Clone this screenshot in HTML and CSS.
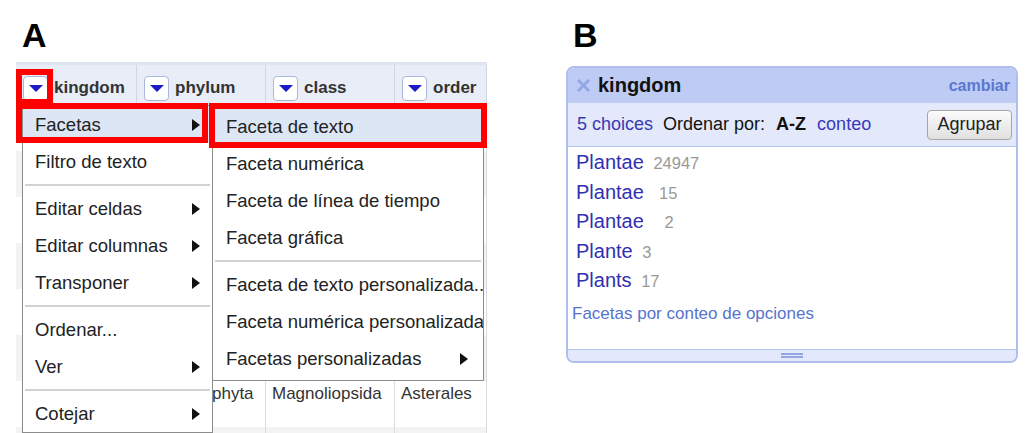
FILE: index.html
```html
<!DOCTYPE html>
<html lang="es">
<head>
<meta charset="utf-8">
<title>Facetas</title>
<link rel="stylesheet" href="styles.css">
</head>
<body>
<div class="page">
  <section class="panel-a">
    <div class="label">A</div>
    <div class="grid-wrap">
      <div class="table">
        <div class="thead">
          <div class="th"><span class="colbtn"></span><span>kingdom</span></div>
          <div class="th"><span class="colbtn"></span><span>phylum</span></div>
          <div class="th"><span class="colbtn"></span><span>class</span></div>
          <div class="th"><span class="colbtn"></span><span>order</span></div>
        </div>
        <div class="tr"><div class="td"></div><div class="td"></div><div class="td"></div><div class="td"></div></div>
        <div class="tr"><div class="td"></div><div class="td"></div><div class="td"></div><div class="td"></div></div>
        <div class="tr"><div class="td"></div><div class="td"></div><div class="td"></div><div class="td"></div></div>
        <div class="tr"><div class="td"></div><div class="td"></div><div class="td"></div><div class="td"></div></div>
        <div class="tr"><div class="td"></div><div class="td"></div><div class="td"></div><div class="td"></div></div>
        <div class="tr"><div class="td"></div><div class="td"></div><div class="td"></div><div class="td"></div></div>
        <div class="tr"><div class="td">Plantae</div><div class="td">Magnoliophyta</div><div class="td">Magnoliopsida</div><div class="td">Asterales</div></div>
        <div class="tr"><div class="td"></div><div class="td"></div><div class="td"></div><div class="td"></div></div>
      </div>

      <div class="menu">
        <div class="item active"><span>Facetas</span><span class="arrow"></span></div>
        <div class="item"><span>Filtro de texto</span></div>
        <div class="sep"></div>
        <div class="item"><span>Editar celdas</span><span class="arrow"></span></div>
        <div class="item"><span>Editar columnas</span><span class="arrow"></span></div>
        <div class="item"><span>Transponer</span><span class="arrow"></span></div>
        <div class="sep"></div>
        <div class="item"><span>Ordenar...</span></div>
        <div class="item"><span>Ver</span><span class="arrow"></span></div>
        <div class="sep"></div>
        <div class="item"><span>Cotejar</span><span class="arrow"></span></div>
      </div>

      <div class="submenu">
        <div class="item active"><span>Faceta de texto</span></div>
        <div class="item"><span>Faceta numérica</span></div>
        <div class="item"><span>Faceta de línea de tiempo</span></div>
        <div class="item"><span>Faceta gráfica</span></div>
        <div class="sep"></div>
        <div class="item"><span>Faceta de texto personalizada...</span></div>
        <div class="item"><span>Faceta numérica personalizada</span></div>
        <div class="item"><span>Facetas personalizadas</span><span class="arrow"></span></div>
      </div>

      <div class="hl hl-btn"></div>
      <div class="hl hl-facetas"></div>
      <div class="hl hl-sub"></div>
    </div>
  </section>

  <section class="panel-b">
    <div class="label">B</div>
    <div class="facet">
      <div class="facet-head">
        <svg class="close" width="13" height="13" viewBox="0 0 13 13"><path d="M2 2 L11 11 M11 2 L2 11" stroke="#93a9e6" stroke-width="3" stroke-linecap="square"/></svg>
        <span class="facet-title">kingdom</span>
        <span class="change">cambiar</span>
      </div>
      <div class="facet-controls">
        <span class="choices">5 choices</span>
        <span class="sortlabel">Ordenar por:</span>
        <span class="sort-az">A-Z</span>
        <span class="sort-count">conteo</span>
        <button class="cluster">Agrupar</button>
      </div>
      <div class="facet-body">
        <div class="choice"><span class="name">Plantae </span><span class="count">24947</span></div>
        <div class="choice"><span class="name">Plantae  </span><span class="count">15</span></div>
        <div class="choice"><span class="name">Plantae   </span><span class="count">2</span></div>
        <div class="choice"><span class="name">Plante </span><span class="count">3</span></div>
        <div class="choice"><span class="name">Plants </span><span class="count">17</span></div>
        <div class="facet-link">Facetas por conteo de opciones</div>
      </div>
      <div class="facet-foot"><span class="grip"></span></div>
    </div>
  </section>
</div>
</body>
</html>
```

FILE: styles.css
```css
* { box-sizing: border-box; }

html, body {
  margin: 0;
  padding: 0;
  background: #ffffff;
  overflow: hidden;
}

body {
  font-family: "Liberation Sans", Arial, sans-serif;
  color: #222;
}

.page {
  display: flex;
  padding-left: 16px;
  gap: 79px;
  height: 433px;
  overflow: hidden;
}

.label {
  font-size: 34px;
  font-weight: bold;
  line-height: 34px;
  height: 34px;
  margin-top: 18px;
  color: #000;
}

/* ---------- Panel A ---------- */
.panel-a { width: 471px; }
.panel-a .label { padding-left: 6px; }

.grid-wrap {
  position: relative;
  margin-top: 10px;
  width: 471px;
  height: 371px;
  overflow: hidden;
}

.table {
  width: 471px;
  border-top: 3px solid #dfe4f0;
}

.thead {
  display: grid;
  grid-template-columns: 121px 129px 129px 92px;
  height: 40px;
  background: #e9edf7;
}

.th {
  display: flex;
  align-items: center;
  gap: 6px;
  padding: 6px 0 0 7px;
  border-right: 1px solid #cfd6e8;
  font-size: 17px;
  font-weight: bold;
  color: #333;
  white-space: nowrap;
  overflow: hidden;
}

.colbtn {
  flex: none;
  width: 25px;
  height: 25px;
  border: 1px solid #aab6da;
  border-radius: 4px;
  background: #fff;
  display: flex;
  align-items: center;
  justify-content: center;
}
.colbtn::after {
  content: "";
  display: block;
  margin-top: 1px;
  border-left: 7px solid transparent;
  border-right: 7px solid transparent;
  border-top: 7px solid #1c1cc6;
}

.tr {
  display: grid;
  grid-template-columns: 121px 129px 129px 92px;
  height: 46px;
  background: #fff;
}
.tr:nth-child(odd) { background: #f3f3f3; }

.td {
  padding: 3px 6px;
  font-size: 17px;
  line-height: 20px;
  color: #333;
  border-right: 1px solid #dcdcdc;
  white-space: nowrap;
  overflow: hidden;
}

/* menus */
.menu, .submenu {
  position: absolute;
  background: #fff;
  border: 1px solid #8c8c8c;
  font-size: 18.5px;
  color: #222;
}

.menu {
  left: 6px;
  top: 43px;
  width: 191px;
}

.submenu {
  left: 196px;
  top: 45px;
  width: 272px;
  padding-bottom: 3px;
  overflow: hidden;
}

.item {
  height: 37px;
  display: flex;
  align-items: center;
  justify-content: space-between;
  padding: 0 12px;
  white-space: nowrap;
}
.submenu .item { padding: 0 15px 0 13px; }

.item.active { background: #dde6f5; }

.arrow {
  flex: none;
  width: 0;
  height: 0;
  border-top: 6px solid transparent;
  border-bottom: 6px solid transparent;
  border-left: 8px solid #111;
}

.sep {
  height: 2px;
  margin: 4px 2px;
  background: #d2d2d2;
}

/* red highlight frames */
.hl {
  position: absolute;
  border: 6px solid #ff0000;
}
.hl-btn { left: 0; top: 7px; width: 37px; height: 36px; }
.hl-facetas { left: 0; top: 41px; width: 192px; height: 40px; }
.hl-sub { left: 193px; top: 41px; width: 278px; height: 45px; }

/* ---------- Panel B ---------- */
.panel-b { width: 452px; }
.panel-b .label { padding-left: 7px; }

.facet {
  margin-top: 14px;
  height: 297px;
  border: 2px solid #adbeef;
  border-radius: 8px;
  overflow: hidden;
  display: flex;
  flex-direction: column;
}

.facet-head {
  height: 35px;
  flex: none;
  display: flex;
  align-items: center;
  padding: 0 6px 0 9px;
  background: #bdcbf5;
}
.close { flex: none; margin-right: 8px; }
.facet-title {
  font-size: 20px;
  font-weight: bold;
  color: #111;
}
.change {
  margin-left: auto;
  font-size: 16px;
  font-weight: bold;
  color: #5a77cf;
}

.facet-controls {
  height: 44px;
  flex: none;
  display: flex;
  align-items: center;
  padding: 0 4px 0 9px;
  background: #e3e9fb;
  border-bottom: 1px solid #b3c3f0;
  font-size: 18px;
}
.choices { color: #3939b2; }
.sortlabel { margin-left: 10px; color: #111; }
.sort-az { margin-left: 11px; font-weight: bold; color: #111; }
.sort-count { margin-left: 11px; color: #3939b8; }

.cluster {
  margin-left: auto;
  width: 85px;
  height: 30px;
  padding: 0;
  font-family: "Liberation Sans", Arial, sans-serif;
  font-size: 18px;
  color: #222;
  background: linear-gradient(#fbfbfb, #e0e0e0);
  border: 1px solid #a6a6a6;
  border-radius: 4px;
}

.facet-body {
  flex: 1;
  padding: 1px 0 0 8px;
  background: #fff;
}

.choice {
  display: flex;
  align-items: baseline;
  height: 29.5px;
  font-size: 20px;
  line-height: 29.5px;
  white-space: pre;
}
.name { color: #3030b2; }
.count {
  margin-left: 4px;
  font-size: 16.5px;
  line-height: 20px;
  color: #999;
}

.facet-link {
  margin: 8px 0 0 -4px;
  font-size: 17px;
  line-height: 20px;
  color: #5673cf;
}

.facet-foot {
  height: 12px;
  flex: none;
  display: flex;
  align-items: center;
  justify-content: center;
  background: #e3e9fb;
  border-top: 1px solid #b3c3f0;
}
.grip {
  width: 22px;
  height: 5px;
  border-top: 2px solid #93a8e2;
  border-bottom: 2px solid #93a8e2;
}
```
